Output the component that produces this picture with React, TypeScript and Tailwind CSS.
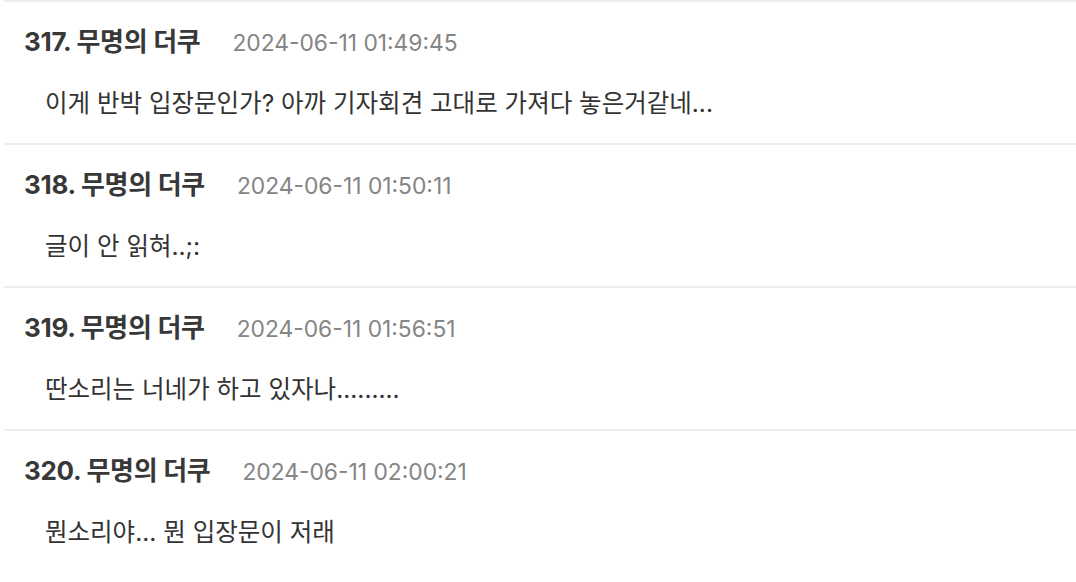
import React from "react";

const rows = [
  { n: 317, t: "2024-06-11 01:49:45", body: "이게 반박 입장문인가? 아까 기자회견 고대로 가져다 놓은거같네..." },
  { n: 318, t: "2024-06-11 01:50:11", body: "글이 안 읽혀..;:" },
  { n: 319, t: "2024-06-11 01:56:51", body: "딴소리는 너네가 하고 있자나........." },
  { n: 320, t: "2024-06-11 02:00:21", body: "뭔소리야... 뭔 입장문이 저래" },
];

export default function App() {
  return (
    <div
      className="w-[1076px] h-[582px] bg-white overflow-hidden pl-[4px]"
      style={{ fontFamily: '"Inter", "Noto Sans CJK KR", sans-serif' }}
    >
      {rows.map((r) => (
        <div key={r.n} className="border-t-2 border-[#eeeeee] h-[143px] pl-[20px]">
          <div className="flex items-baseline pt-[24px] leading-[32px]">
            <span className="text-[26px] font-bold text-[#383838] tracking-[-0.3px]">
              {r.n}. 무명의 더쿠
            </span>
            <span className="ml-[32px] text-[22.8px] text-[#858585]">{r.t}</span>
          </div>
          <div className="pl-[21px] mt-[28px] text-[24.5px] text-[#333333] leading-[32px]">
            {r.body}
          </div>
        </div>
      ))}
    </div>
  );
}
